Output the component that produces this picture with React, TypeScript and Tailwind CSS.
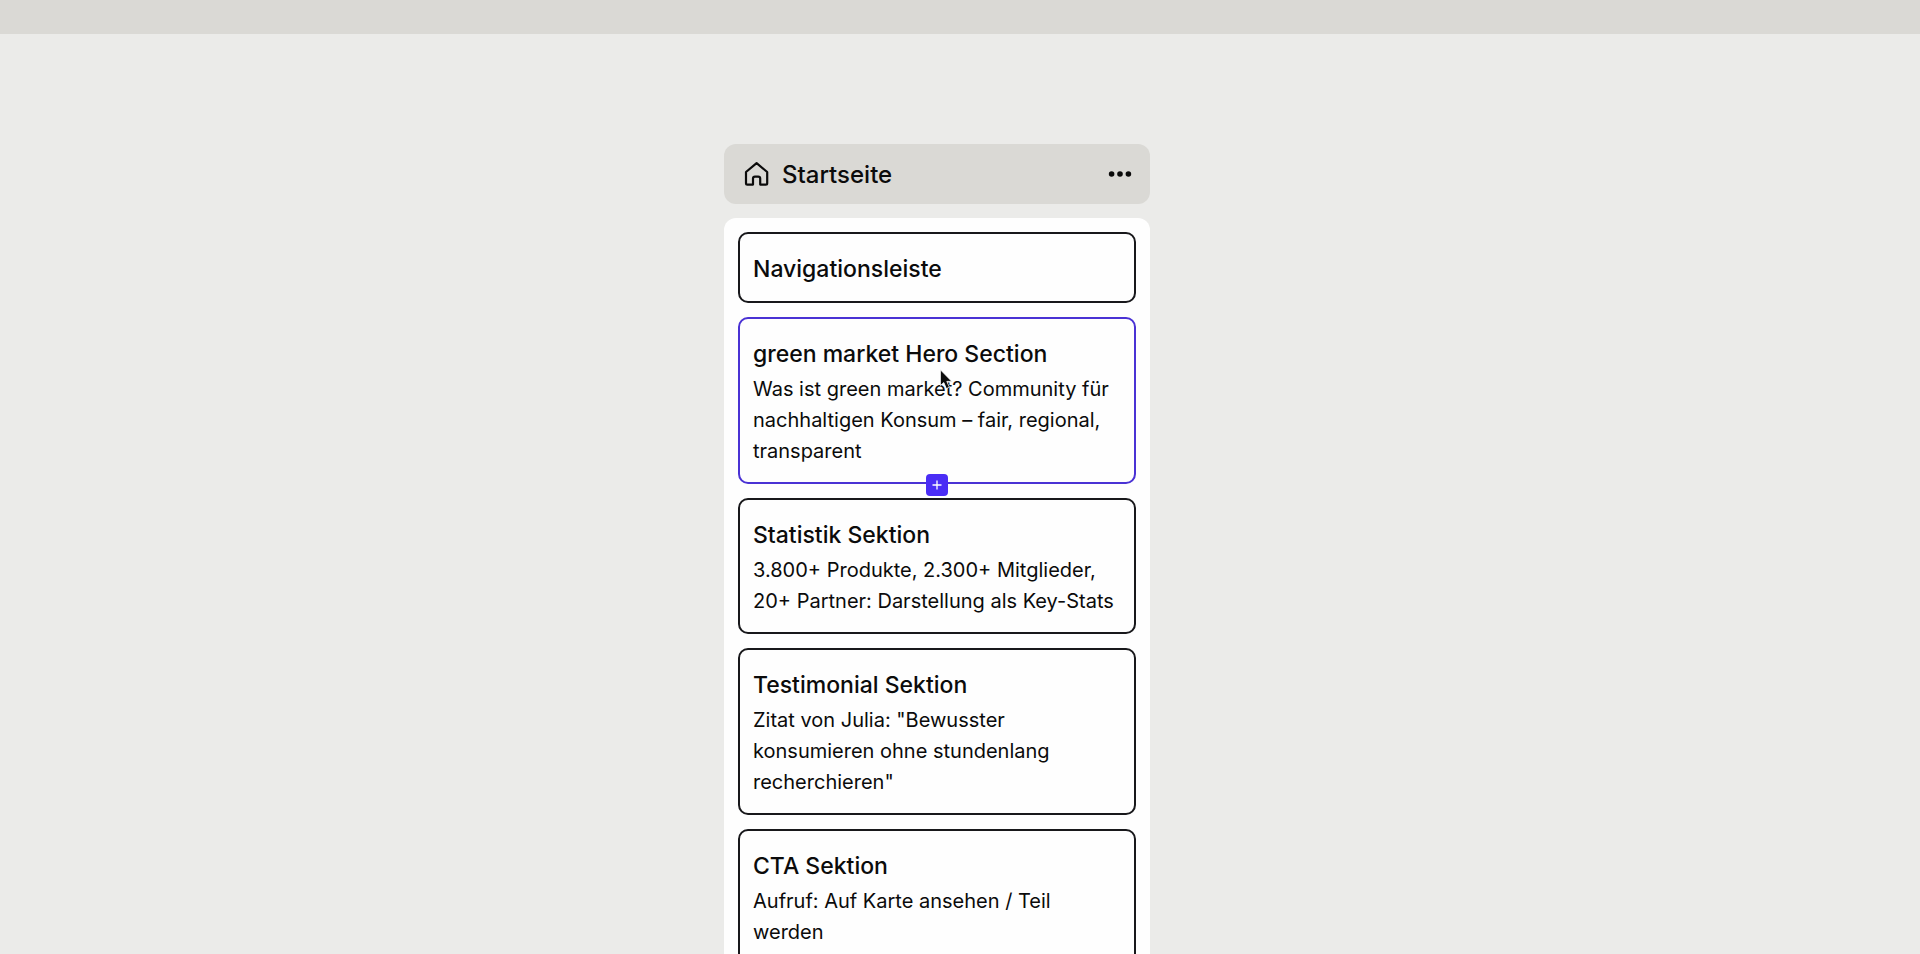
import React, { useState } from 'react';

type Section = {
  id: number;
  title: string;
  text?: string;
};

const sections: Section[] = [
  { id: 1, title: 'Navigationsleiste' },
  { id: 2, title: 'green market Hero Section', text: 'Was ist green market? Community für nachhaltigen Konsum – fair, regional, transparent' },
  { id: 3, title: 'Statistik Sektion', text: '3.800+ Produkte, 2.300+ Mitglieder, 20+ Partner: Darstellung als Key-Stats' },
  { id: 4, title: 'Testimonial Sektion', text: 'Zitat von Julia: "Bewusster konsumieren ohne stundenlang recherchieren"' },
  { id: 5, title: 'CTA Sektion', text: 'Aufruf: Auf Karte ansehen / Teil werden' },
];

function HomeIcon() {
  return (
    <svg width="26" height="26" viewBox="0 0 26 26" fill="none" stroke="currentColor" strokeWidth="2.2" strokeLinejoin="round" aria-hidden="true">
      <path d="M3 11 L13.6 2.2 L24.2 11 V22.2 Q24.2 23.6 22.8 23.6 H17.2 V17.6 Q17.2 15.6 15.2 15.6 H12 Q10 15.6 10 17.6 V23.6 H4.4 Q3 23.6 3 22.2 Z" />
    </svg>
  );
}

function DotsIcon() {
  return (
    <svg width="24" height="8" viewBox="0 0 24 8" fill="currentColor" aria-hidden="true">
      <circle cx="3.6" cy="4" r="2.8" />
      <circle cx="12" cy="4" r="2.8" />
      <circle cx="20.4" cy="4" r="2.8" />
    </svg>
  );
}

function Pointer() {
  return (
    <svg className="absolute left-1/2 top-[50px] ml-[2px] pointer-events-none" width="14" height="22" viewBox="0 0 14 22" aria-hidden="true">
      <path d="M1.4 0.8 V16.6 L4.8 13.6 L7.4 19.6 L10.4 18.2 L7.8 12.4 H12.8 Z" fill="#0b0b0b" stroke="#fff" strokeWidth="0.8" />
    </svg>
  );
}

export default function App() {
  const [activeId, setActiveId] = useState(2);

  return (
    <div className="h-screen overflow-hidden bg-[#ebebe9] text-[#0b0b0b] font-['Inter',sans-serif]">
      {/* Top bar */}
      <header className="h-[34px] bg-[#dad9d5]" />

      {/* Canvas */}
      <main className="pt-[110px] pr-[46px]">
        <div className="w-full max-w-[426px] mx-auto">
          <div className="flex items-center justify-between h-15 pl-[19px] pr-[18px] rounded-xl bg-[#dad9d5]">
            <div className="flex items-center gap-[13px]">
              <HomeIcon />
              <h1 className="pt-0.5 text-2xl font-medium">Startseite</h1>
            </div>
            <button type="button" aria-label="Menü">
              <DotsIcon />
            </button>
          </div>

          {/* Sections of the page */}
          <ul className="mt-3.5 p-3.5 rounded-xl bg-[#fefefe] flex flex-col gap-3.5">
            {sections.map((section) => (
              <li
                key={section.id}
                onMouseEnter={() => setActiveId(section.id)}
                className={`relative rounded-[10px] border-2 px-[13px] pt-[19px] pb-[15px] ${
                  activeId === section.id ? 'border-[#4a32d4]' : 'border-[#18181b]'
                }`}
              >
                <h2 className="text-[23px] leading-[33px] font-medium">{section.title}</h2>
                {section.text && <p className="mt-[3px] text-xl leading-[31px]">{section.text}</p>}
                {activeId === section.id && (
                  <>
                    <button
                      type="button"
                      aria-label="Sektion hinzufügen"
                      className="absolute left-1/2 bottom-0 -translate-x-1/2 translate-y-[14px] z-10 size-[22px] rounded-[4px] bg-[#4a2df5] text-white flex items-center justify-center"
                    >
                      <svg width="10" height="10" viewBox="0 0 10 10" stroke="currentColor" strokeWidth="1.3" aria-hidden="true">
                        <path d="M5 0.5 V9.5 M0.5 5 H9.5" />
                      </svg>
                    </button>
                    <Pointer />
                  </>
                )}
              </li>
            ))}
          </ul>
        </div>
      </main>
    </div>
  );
}
